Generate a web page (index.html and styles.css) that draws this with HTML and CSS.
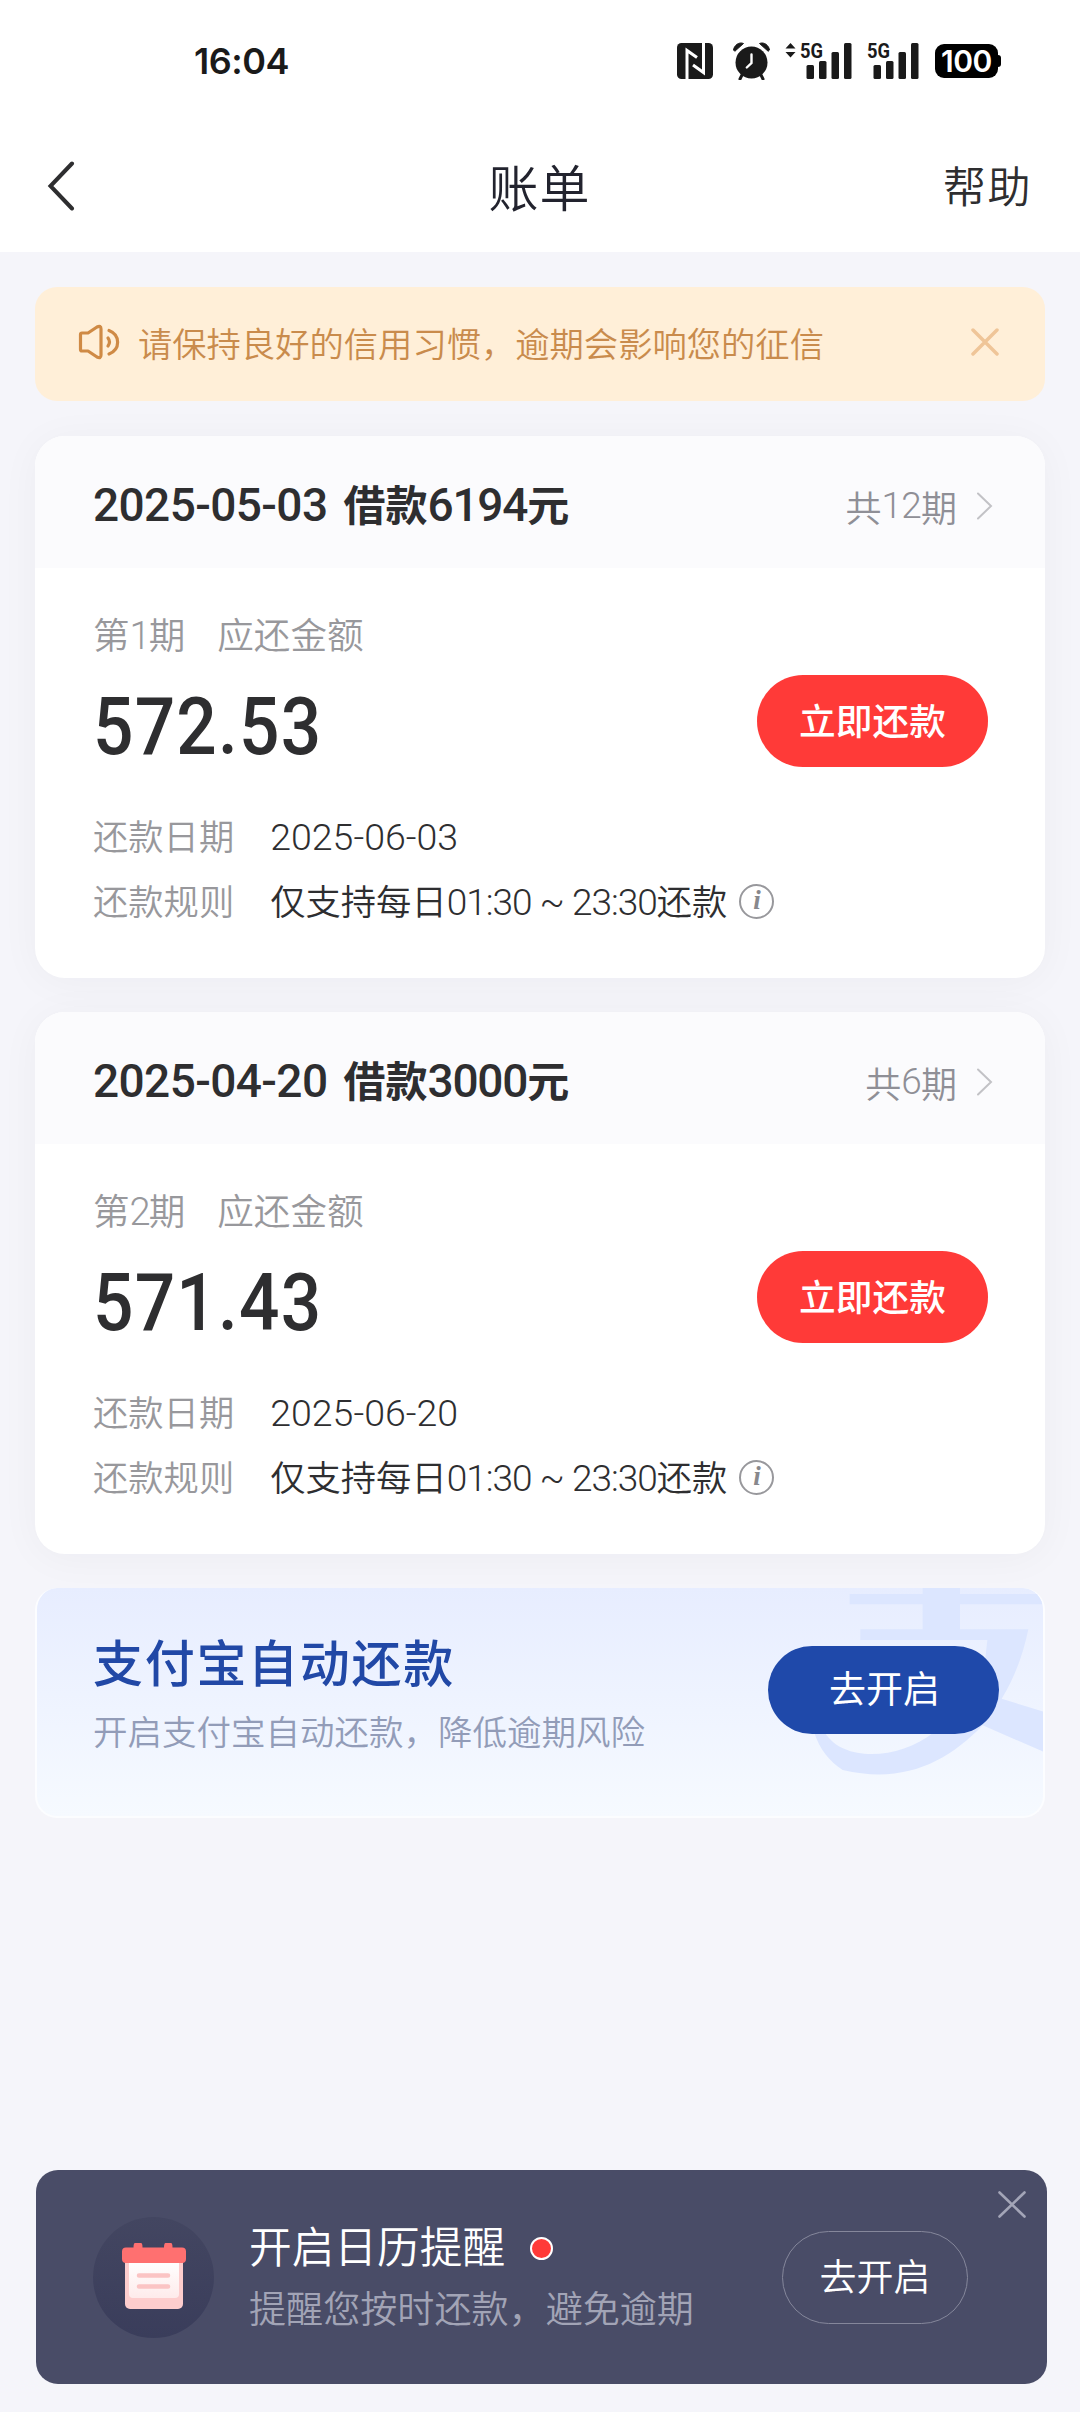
FILE: index.html
```
<!DOCTYPE html>
<html lang="zh-CN">
  <head>
    <meta charset="UTF-8" />
    <meta name="viewport" content="width=device-width, initial-scale=1.0" />
    <title>账单</title>
    <link rel="stylesheet" href="styles.css">
  </head>
  <body>
    <header class="header">
      <div class="status-bar">
        <span class="time">16:04</span>
        <div class="status-icons">
          <svg class="nfc" width="36" height="36" viewBox="0 0 36 36">
            <rect width="36" height="36" rx="4.5" fill="#1a1a1a" />
            <path d="M10 36V7.5L20 14.500M26.500 0V29.500L16 22" fill="none" stroke="#fff" stroke-width="3" />
          </svg>
          <svg class="alarm" width="37" height="38" viewBox="0 0 37 38" fill="#1a1a1a">
            <path d="M9 33L7 37M28 33L30 37" stroke="#1a1a1a" stroke-width="3" stroke-linecap="round" />
            <circle cx="18.500" cy="20.500" r="16" />
            <path d="M0.500 8C1 3.500 6 -0.500 10.500 1.500L1.800 9.300ZM36.500 8C36 3.500 31 -0.500 26.500 1.500L35.200 9.300Z" stroke="#1a1a1a" stroke-linejoin="round" />
            <path d="M18.500 12.500V21L13.800 25.500" fill="none" stroke="#fff" stroke-width="2.400" stroke-linecap="round" />
          </svg>
          <svg class="signal" width="67" height="38" viewBox="0 0 67 38" fill="#1a1a1a">
            <path d="M5.500 1L10.500 6.500H0.500ZM5.500 15.500L10.500 10H0.500Z" />
            <text class="net" x="15" y="15.500" textLength="23" lengthAdjust="spacingAndGlyphs">5G</text>
            <rect x="21.500" y="23" width="7.500" height="14" rx="1.500" />
            <rect x="34" y="19" width="7.500" height="18" rx="1.500" />
            <rect x="46.500" y="10" width="7.500" height="27" rx="1.500" />
            <rect x="59" y="1" width="7.500" height="36" rx="1.500" />
          </svg>
          <svg class="signal" width="52" height="38" viewBox="0 0 52 38" fill="#1a1a1a">
            <text class="net" x="0" y="15.500" textLength="23" lengthAdjust="spacingAndGlyphs">5G</text>
            <rect x="6.500" y="23" width="7.500" height="14" rx="1.500" />
            <rect x="19" y="19" width="7.500" height="18" rx="1.500" />
            <rect x="31.500" y="10" width="7.500" height="27" rx="1.500" />
            <rect x="44" y="1" width="7.500" height="36" rx="1.500" />
          </svg>
          <div class="battery">100</div>
        </div>
      </div>
      <nav class="nav">
        <svg class="back" width="28" height="50" viewBox="0 0 28 50">
          <path d="M25 2.500L3.500 25L25 47.500" fill="none" stroke="#2e2e30" stroke-width="4" stroke-linecap="round" />
        </svg>
        <h1>账单</h1>
        <a class="help">帮助</a>
      </nav>
    </header>

    <main class="content">
      <div class="notice">
        <svg width="42" height="36" viewBox="0 0 42 36" fill="none" stroke="#cf8a45" stroke-width="3.200" stroke-linecap="round" stroke-linejoin="round">
          <path d="M4 9H10L19 3Q23 1 23 5V31Q23 35 19 33L10 27H4Q2.500 27 2.500 25.500V10.500Q2.500 9 4 9Z" />
          <path d="M30 14Q33 18 30 22M31 6.500C42.500 11 42.500 25.500 31 30" />
        </svg>
        <p>请保持良好的信用习惯，逾期会影响您的征信</p>
        <svg class="notice-close" width="28" height="28" viewBox="0 0 28 28">
          <path d="M2 2L26 26M26 2L2 26" stroke="#efc598" stroke-width="3.500" stroke-linecap="round" />
        </svg>
      </div>

      <section class="card">
        <div class="card-head">
          <h2><span class="date">2025-05-03</span><span class="loan">借款<span class="num">6194</span>元</span></h2>
          <div class="periods">共<span class="num">12</span>期
            <svg width="17" height="28" viewBox="0 0 17 28"><path d="M2 1.500L15 14L2 26.500" fill="none" stroke="#c2c2c6" stroke-width="2" stroke-linecap="round" /></svg>
          </div>
        </div>
        <div class="card-body">
          <div class="label"><span>第<span class="num">1</span>期</span><span>应还金额</span></div>
          <div class="amount-row">
            <strong class="amount">572.53</strong>
            <button class="pay">立即还款</button>
          </div>
          <div class="row"><span class="key">还款日期</span><span class="small-date">2025-06-03</span></div>
          <div class="row">
            <span class="key">还款规则</span>
            <span class="value">仅支持每日<span class="num">01:30 ~ 23:30</span>还款</span>
            <span class="info">i</span>
          </div>
        </div>
      </section>

      <section class="card">
        <div class="card-head">
          <h2><span class="date">2025-04-20</span><span class="loan">借款<span class="num">3000</span>元</span></h2>
          <div class="periods">共<span class="num">6</span>期
            <svg width="17" height="28" viewBox="0 0 17 28"><path d="M2 1.500L15 14L2 26.500" fill="none" stroke="#c2c2c6" stroke-width="2" stroke-linecap="round" /></svg>
          </div>
        </div>
        <div class="card-body">
          <div class="label"><span>第<span class="num">2</span>期</span><span>应还金额</span></div>
          <div class="amount-row">
            <strong class="amount">571.43</strong>
            <button class="pay">立即还款</button>
          </div>
          <div class="row"><span class="key">还款日期</span><span class="small-date">2025-06-20</span></div>
          <div class="row">
            <span class="key">还款规则</span>
            <span class="value">仅支持每日<span class="num">01:30 ~ 23:30</span>还款</span>
            <span class="info">i</span>
          </div>
        </div>
      </section>

      <section class="banner">
        <!-- watermark logo behind the button -->
        <svg class="watermark" width="233" height="230" viewBox="750 86 699 690" fill="#dce6ff">
          <path d="M869 104H1088V80H1200V104H1450V135H1200V210H1405Q1380 330 1325 418L1450 457V577L1268 498C1160 610 1030 675 848 632Q785 590 763 520V440H795V520C850 610 1020 600 1120 520V440H1250Q1272 350 1282 242H901V210H1088V135H869Z" />
        </svg>
        <div class="banner-text">
          <h3>支付宝自动还款</h3>
          <p>开启支付宝自动还款，降低逾期风险</p>
        </div>
        <button class="banner-btn">去开启</button>
      </section>
    </main>

    <aside class="reminder">
      <svg class="calendar" width="121" height="121" viewBox="0 0 121 121">
        <defs>
          <linearGradient id="disc" x1="0" y1="0" x2="0" y2="1">
            <stop offset="0" stop-color="#434661" />
            <stop offset="1" stop-color="#3a3d5b" />
          </linearGradient>
          <linearGradient id="sheet" x1="0" y1="0" x2="0" y2="1">
            <stop offset="0" stop-color="#fff" />
            <stop offset="1" stop-color="#feebeb" />
          </linearGradient>
        </defs>
        <circle cx="60.500" cy="60.500" r="60.500" fill="url(#disc)" />
        <rect x="32" y="39" width="58" height="53" rx="5" fill="#fdcdcd" />
        <path d="M36 45H86V77Q86 81 82 81H40Q36 81 36 77Z" fill="url(#sheet)" />
        <path d="M42 26H48Q49.500 26 49.500 30.500H71Q71 26 72.500 26H78Q79.500 26 79.500 30.500H89Q93 30.500 93 34.500V42Q93 46 89 46H33Q29 46 29 42V34.500Q29 30.500 33 30.500H40.500Q40.500 26 42 26Z" fill="#ff7070" />
        <path d="M46 58.500H75M46 69.500H75" stroke="#fbc4c4" stroke-width="4.500" stroke-linecap="round" />
      </svg>
      <div class="reminder-text">
        <h3>开启日历提醒<span class="dot"></span></h3>
        <p>提醒您按时还款，避免逾期</p>
      </div>
      <button class="reminder-btn">去开启</button>
      <svg class="reminder-close" width="28" height="27" viewBox="0 0 28 27">
        <path d="M1.500 1.500L26.500 25.500M26.500 1.500L1.500 25.500" stroke="#a3a5b7" stroke-width="2.600" stroke-linecap="round" />
      </svg>
    </aside>
  </body>
</html>
```

FILE: styles.css
```
* {
  margin: 0;
  padding: 0;
  box-sizing: border-box;
}

body {
  background: #f5f5fa;
  font-family: "Noto Sans CJK SC", sans-serif;
  font-weight: 350;
  color: #2e2e30;
  width: 1080px;
  height: 2412px;
  display: flex;
  flex-direction: column;
  overflow: hidden;
  white-space: nowrap;
}

button {
  border: none;
  font-family: inherit;
}

h1,
h2,
h3 {
  font-weight: inherit;
}

/* top bar */
.header {
  background: #fff;
  height: 252px;
}

.status-bar {
  height: 122px;
  padding: 0 79px 0 194px;
  display: flex;
  align-items: center;
  justify-content: space-between;
}

.time {
  font-family: Inter, sans-serif;
  font-size: 36px;
  font-weight: 600;
  color: #1a1a1a;
  letter-spacing: -0.5px;
}

.status-icons {
  display: flex;
  align-items: center;
}

.alarm {
  margin-left: 20px;
}

.signal {
  margin-left: 15px;
  overflow: visible;
}

.net {
  font-family: Roboto, sans-serif;
  font-size: 20px;
  font-weight: 700;
}

.battery {
  position: relative;
  margin-left: 16px;
  margin-right: 3px;
  width: 63px;
  height: 34px;
  border-radius: 9px;
  background: #000;
  color: #fff;
  font-family: Inter, sans-serif;
  font-size: 30px;
  font-weight: 600;
  line-height: 35px;
  text-align: center;
  letter-spacing: -0.5px;
}

.battery::after {
  content: "";
  position: absolute;
  right: -3px;
  top: 11px;
  width: 4px;
  height: 12px;
  border-radius: 0 3px 3px 0;
  background: #000;
}

.nav {
  height: 128px;
  padding: 0 48px 0 47px;
  display: grid;
  grid-template-columns: 1fr auto 1fr;
  align-items: center;
}

.nav h1 {
  font-size: 50px;
  line-height: 64px;
  letter-spacing: 1px;
  padding-bottom: 3px;
  color: #22232e;
}

.help {
  justify-self: end;
  padding-bottom: 4px;
  font-size: 43px;
  letter-spacing: 1.5px;
}

/* notice */
.content {
  padding: 35px 35px 0;
  display: flex;
  flex-direction: column;
}

.notice {
  height: 114px;
  padding: 0 46px 5px 43px;
  margin-bottom: 35px;
  border-radius: 22px;
  background: #ffefd8;
  color: #c98b4c;
  display: flex;
  align-items: center;
}

.notice p {
  margin-left: 18px;
  font-size: 34.3px;
}

.notice-close {
  margin-left: auto;
}

/* bill cards */
.card {
  height: 542px;
  margin-bottom: 34px;
  border-radius: 30px;
  background: #fff;
  box-shadow: 0 4px 40px rgba(30, 30, 60, 0.04);
  overflow: hidden;
}

.num,
.date,
.small-date,
.amount {
  font-family: Roboto, sans-serif;
}

.card-head {
  height: 132px;
  padding: 0 52px 0 58px;
  background: #fbfbfd;
  display: flex;
  align-items: center;
  justify-content: space-between;
}

.card-head h2 {
  display: flex;
  align-items: baseline;
  gap: 16px;
  font-size: 42px;
}

.date {
  font-size: 46px;
  font-weight: 500;
  letter-spacing: -0.6px;
}

.loan {
  font-weight: 700;
}

.loan .num {
  font-size: 46px;
  font-weight: 500;
  letter-spacing: -1.2px;
}

.periods {
  display: flex;
  align-items: center;
  padding-top: 7px;
  font-size: 36px;
  color: #8f8f96;
}

.periods .num {
  font-size: 37px;
  letter-spacing: -0.8px;
}

.periods svg {
  margin-left: 19px;
}

.card-body {
  padding: 46px 57px 0 58px;
}

.label {
  height: 40px;
  padding-bottom: 2px;
  display: flex;
  align-items: center;
  gap: 32px;
  font-size: 36.6px;
  color: #98989c;
}

.label .num {
  font-size: 38px;
  letter-spacing: -2px;
}

.amount-row {
  height: 92px;
  margin: 21px 0 37px;
  display: flex;
  align-items: center;
  justify-content: space-between;
}

/* narrow figures for the amount */
.amount {
  padding-top: 11px;
  font-size: 79px;
  font-weight: 500;
  letter-spacing: 1.4px;
  transform: scaleX(0.9);
  transform-origin: left;
}

.pay {
  width: 231px;
  height: 92px;
  padding-bottom: 5px;
  border-radius: 46px;
  background: #ff3a38;
  color: #fff;
  font-size: 36.7px;
  font-weight: 500;
}

.row {
  height: 65px;
  display: flex;
  align-items: center;
  font-size: 35.3px;
}

.key {
  padding-bottom: 4px;
  color: #98989c;
}

.value,
.small-date {
  margin-left: 36px;
}

.value {
  padding-bottom: 4px;
}

.row .num {
  font-size: 37px;
  letter-spacing: -1px;
}

.small-date {
  font-size: 37.5px;
  letter-spacing: 0;
}

.info {
  width: 35px;
  height: 35px;
  margin-left: 12px;
  border: 2px solid #98989c;
  border-radius: 50%;
  color: #88888c;
  font: italic bold 27px/29px "Liberation Serif", serif;
  text-align: center;
}

/* auto repay banner */
.banner {
  position: relative;
  height: 230px;
  padding: 0 44px 0 56px;
  border: 2px solid #fcfdff;
  border-top: none;
  border-radius: 22px;
  background: linear-gradient(#e7edff, #f6faff);
  display: flex;
  justify-content: space-between;
  overflow: hidden;
}

.watermark {
  position: absolute;
  right: 0;
  top: 0;
}

.banner-text h3 {
  margin-top: 36px;
  font-size: 50px;
  font-weight: 500;
  line-height: 72px;
  letter-spacing: 1.7px;
  color: #2148a6;
}

.banner-text p {
  font-size: 34.5px;
  line-height: 69px;
  color: #929cb8;
}

.banner-btn {
  position: relative;
  width: 231px;
  height: 88px;
  margin-top: 58px;
  padding: 0 0 6px 2px;
  border-radius: 44px;
  background: #1f49aa;
  color: #fff;
  font-size: 37px;
  font-weight: 400;
}

/* calendar reminder */
.reminder {
  position: relative;
  width: 1011px;
  height: 214px;
  margin: auto 0 28px 36px;
  padding: 0 79px 0 57px;
  border-radius: 22px;
  background: #494c67;
  display: flex;
  align-items: center;
}

.reminder-text {
  margin-left: 35px;
  padding-bottom: 2px;
}

.reminder-text h3 {
  display: flex;
  align-items: center;
  font-size: 42.7px;
  line-height: 62px;
  color: #fff;
}

.dot {
  width: 23px;
  height: 23px;
  margin: 9px 0 0 25px;
  border: 2px solid #fff;
  border-radius: 50%;
  background: #ff3a38;
}

.reminder-text p {
  font-size: 37.1px;
  line-height: 64px;
  color: #a2a4b6;
}

.reminder-btn {
  width: 186px;
  height: 93px;
  padding-bottom: 5px;
  margin-left: auto;
  border: 1px solid #85879b;
  border-radius: 47px;
  background: none;
  color: #fff;
  font-size: 37px;
  font-weight: 350;
}

.reminder-close {
  position: absolute;
  right: 21px;
  top: 21px;
}
```
